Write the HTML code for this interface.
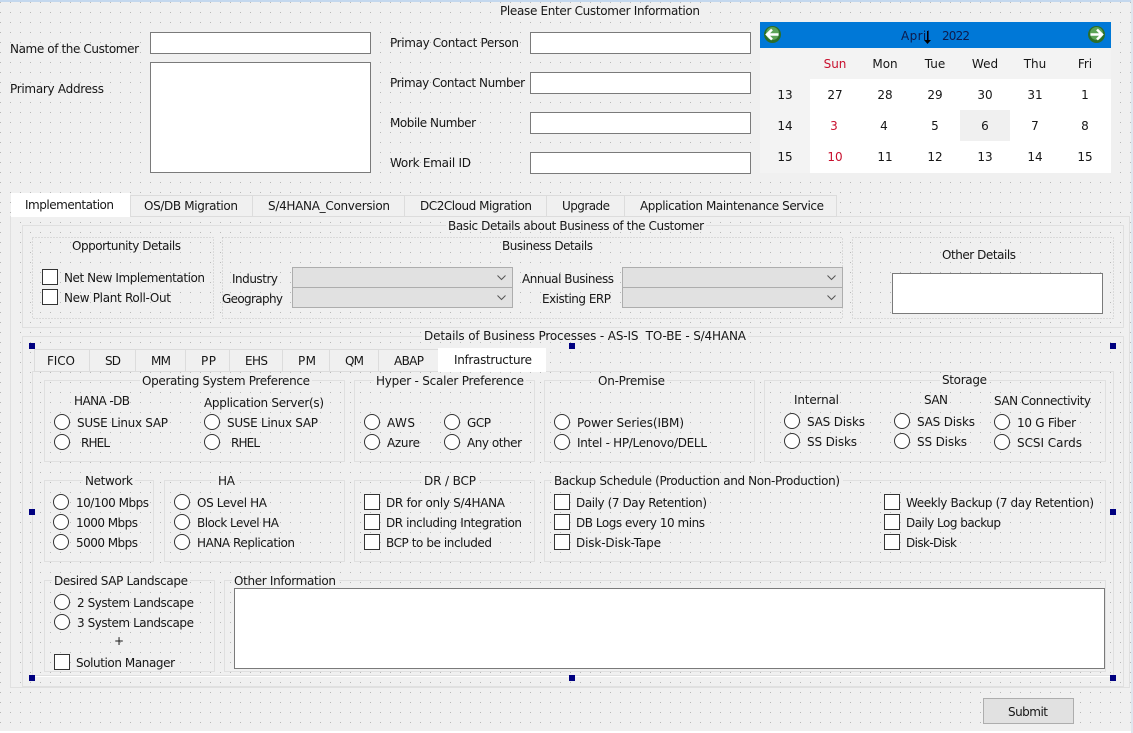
<!DOCTYPE html>
<html><head><meta charset="utf-8"><style>
html,body{margin:0;padding:0;width:1133px;height:733px;overflow:hidden;background:#f0f0f0}
svg{display:block}
text{font-family:"DejaVu Sans","Liberation Sans",sans-serif;font-size:12px;fill:#161616}
.m{text-anchor:middle}
.g{fill:none;stroke:#e0e0e0;stroke-width:1}
.i{fill:#fff;stroke:#7a7a7a;stroke-width:1}
.c{fill:#fff;stroke:#333;stroke-width:1}
.b{fill:#f0f0f0}
.h{fill:#000080}
.tb{fill:#f0f0f0;stroke:#dcdcdc}
.cb{fill:#e1e1e1;stroke:#adadad}
.ch{fill:none;stroke:#555;stroke-width:1}
.d{fill:none;stroke:#c4c4c4;stroke-dasharray:1 2}
</style></head><body>
<svg width="1133" height="733" viewBox="0 0 1133 733" xmlns="http://www.w3.org/2000/svg">
<defs><pattern id="dots" x="0" y="2" width="10" height="10" patternUnits="userSpaceOnUse"><rect width="10" height="10" fill="#f0f0f0"/><rect width="1" height="1" fill="#b8b8b8"/></pattern></defs>
<rect width="1133" height="733" fill="url(#dots)"/>
<rect width="1133" height="2" fill="#c4d8ee"/>
<rect x="0" y="731" width="1133" height="2" fill="#fff"/>
<rect x="1131" y="0" width="2" height="733" fill="#dfe6ee"/>

<rect class="b" x="498" y="3" width="205" height="14"/>
<text x="500" y="15" textLength="200">Please Enter Customer Information</text>
<text x="10" y="53" textLength="129">Name of the Customer</text>
<text x="10" y="93" textLength="94">Primary Address</text>
<rect class="i" x="150.500" y="32.500" width="220" height="21"/>
<rect class="i" x="150.500" y="62.500" width="220" height="110"/>
<text x="390" y="47" textLength="129">Primay Contact Person</text>
<text x="390" y="87" textLength="135">Primay Contact Number</text>
<text x="390" y="127" textLength="86">Mobile Number</text>
<text x="390" y="167" textLength="81">Work Email ID</text>
<rect class="i" x="530.500" y="32.500" width="220" height="21"/>
<rect class="i" x="530.500" y="72.500" width="220" height="21"/>
<rect class="i" x="530.500" y="112.500" width="220" height="21"/>
<rect class="i" x="530.500" y="152.500" width="220" height="21"/>

<!-- calendar -->
<rect x="760" y="22" width="351" height="151" fill="#f3f3f3"/>
<rect x="760" y="22" width="351" height="26" fill="#0078d7"/>
<rect x="810" y="79" width="301" height="94" fill="#fff"/>
<rect x="960" y="110" width="50" height="31" fill="#f0f0f0"/>
<circle cx="772.500" cy="34.500" r="8.500" fill="#2c6e28"/><circle cx="772.500" cy="33.500" r="6.500" fill="#5da356"/>
<path d="M778.500 34.500H768M772 29.500L767 34.500L772 39.500" fill="none" stroke="#fff" stroke-width="2.500"/>
<circle cx="1096.500" cy="34.500" r="8.500" fill="#2c6e28"/><circle cx="1096.500" cy="33.500" r="6.500" fill="#5da356"/>
<path d="M1090.500 34.500H1101M1097 29.500L1102 34.500L1097 39.500" fill="none" stroke="#fff" stroke-width="2.500"/>
<text x="901" y="40" textLength="29" style="fill:#0d1b4d">April</text>
<text x="942" y="40" textLength="28" style="fill:#0d1b4d">2022</text>
<path d="M927.500 31V41" stroke="#000"/><path d="M924 40H931L927.500 44Z" fill="#000"/>
<g class="m">
<text x="835" y="68" style="fill:#c8102e">Sun</text><text x="885" y="68">Mon</text><text x="935" y="68">Tue</text><text x="985" y="68">Wed</text><text x="1035" y="68">Thu</text><text x="1085" y="68">Fri</text>
<text x="785" y="99">13</text><text x="835" y="99">27</text><text x="885" y="99">28</text><text x="935" y="99">29</text><text x="985" y="99">30</text><text x="1035" y="99">31</text><text x="1085" y="99">1</text>
<text x="785" y="130">14</text><text x="834" y="130" style="fill:#c8102e">3</text><text x="884" y="130">4</text><text x="935" y="130">5</text><text x="985" y="130">6</text><text x="1035" y="130">7</text><text x="1085" y="130">8</text>
<text x="785" y="161">15</text><text x="835" y="161" style="fill:#c8102e">10</text><text x="885" y="161">11</text><text x="935" y="161">12</text><text x="985" y="161">13</text><text x="1035" y="161">14</text><text x="1085" y="161">15</text>
</g>

<!-- outer tabs -->
<rect class="g" x="10.500" y="216.500" width="1119" height="471"/>
<rect class="tb" x="130.500" y="195.500" width="122" height="21"/>
<rect class="tb" x="252.500" y="195.500" width="152" height="21"/>
<rect class="tb" x="404.500" y="195.500" width="142" height="21"/>
<rect class="tb" x="546.500" y="195.500" width="78" height="21"/>
<rect class="tb" x="624.500" y="195.500" width="212" height="21"/>
<rect x="11" y="193" width="119" height="24" fill="#fff"/>
<text x="25" y="209" textLength="89">Implementation</text>
<text x="144" y="210" textLength="94">OS/DB Migration</text>
<text x="268" y="210" textLength="122">S/4HANA_Conversion</text>
<text x="420" y="210" textLength="112">DC2Cloud Migration</text>
<text x="562" y="210" textLength="48">Upgrade</text>
<text x="640" y="210" textLength="184">Application Maintenance Service</text>

<!-- basic details -->
<rect class="g" x="22.500" y="225.500" width="1101" height="102"/>
<rect class="b" x="446" y="219" width="260" height="13"/>
<text x="448" y="230" textLength="256">Basic Details about Business of the Customer</text>
<rect class="d" x="32.500" y="237.500" width="181" height="81"/>
<rect class="d" x="222.500" y="237.500" width="620" height="81"/>
<rect class="d" x="852.500" y="237.500" width="261" height="81"/>
<text x="72" y="250" textLength="109">Opportunity Details</text>
<text x="502" y="250" textLength="91">Business Details</text>
<text x="942" y="259" textLength="74">Other Details</text>
<rect class="c" x="42.500" y="269.500" width="15" height="15"/>
<rect class="c" x="42.500" y="289.500" width="15" height="15"/>
<text x="64" y="282" textLength="141">Net New Implementation</text>
<text x="64" y="302" textLength="107">New Plant Roll-Out</text>
<text x="232" y="283" textLength="46">Industry</text>
<text x="222" y="303" textLength="61">Geography</text>
<text x="522" y="283" textLength="92">Annual Business</text>
<text x="542" y="303" textLength="69">Existing ERP</text>
<rect class="cb" x="292.500" y="267.500" width="220" height="20"/>
<rect class="cb" x="292.500" y="287.500" width="220" height="20"/>
<rect class="cb" x="622.500" y="267.500" width="220" height="20"/>
<rect class="cb" x="622.500" y="287.500" width="220" height="20"/>
<path class="ch" d="M497.500 275.500L501.500 279.500L505.500 275.500M497.500 295.500L501.500 299.500L505.500 295.500M827.500 275.500L831.500 279.500L835.500 275.500M827.500 295.500L831.500 299.500L835.500 295.500"/>
<rect class="i" x="892.500" y="273.500" width="210" height="40"/>

<!-- processes -->
<rect class="g" x="22.500" y="336.500" width="1101" height="350"/>
<rect class="b" x="422" y="329" width="326" height="13"/>
<text x="424" y="340" textLength="322" xml:space="preserve" style="white-space:pre">Details of Business Processes - AS-IS  TO-BE - S/4HANA</text>
<rect x="32.500" y="371.500" width="1081" height="304" fill="none" stroke="#e0e0e0"/>
<path d="M32 676.500H1113" stroke="#fff"/>
<rect class="tb" x="34.500" y="349.500" width="55" height="22"/>
<rect class="tb" x="89.500" y="349.500" width="46" height="22"/>
<rect class="tb" x="135.500" y="349.500" width="50" height="22"/>
<rect class="tb" x="185.500" y="349.500" width="44" height="22"/>
<rect class="tb" x="229.500" y="349.500" width="53" height="22"/>
<rect class="tb" x="282.500" y="349.500" width="47" height="22"/>
<rect class="tb" x="329.500" y="349.500" width="49" height="22"/>
<rect class="tb" x="378.500" y="349.500" width="60" height="22"/>
<rect x="438" y="348" width="108" height="24" fill="#fff"/>
<text x="47" y="365" textLength="28">FICO</text><text x="105" y="365" textLength="16">SD</text><text x="151" y="365" textLength="20">MM</text><text x="201" y="365" textLength="15">PP</text><text x="245" y="365" textLength="23">EHS</text><text x="298" y="365" textLength="18">PM</text><text x="345" y="365" textLength="19">QM</text><text x="394" y="365" textLength="30">ABAP</text><text x="454" y="364" textLength="78">Infrastructure</text>

<rect class="g" x="44.500" y="380.500" width="300" height="81"/>
<rect class="g" x="354.500" y="380.500" width="180" height="81"/>
<rect class="g" x="544.500" y="380.500" width="210" height="81"/>
<rect class="g" x="764.500" y="380.500" width="341" height="81"/>
<rect class="g" x="44.500" y="480.500" width="109" height="81"/>
<rect class="g" x="164.500" y="480.500" width="180" height="81"/>
<rect class="g" x="354.500" y="480.500" width="180" height="81"/>
<rect class="g" x="544.500" y="480.500" width="561" height="81"/>
<rect class="g" x="44.500" y="580.500" width="170" height="91"/>
<rect class="g" x="224.500" y="580.500" width="881" height="91"/>

<rect class="b" x="140" y="374" width="172" height="13"/><text x="142" y="385" textLength="168">Operating System Preference</text>
<rect class="b" x="374" y="374" width="152" height="13"/><text x="376" y="385" textLength="148">Hyper - Scaler Preference</text>
<rect class="b" x="596" y="374" width="71" height="13"/><text x="598" y="385" textLength="67">On-Premise</text>
<rect class="b" x="940" y="374" width="49" height="13"/><text x="942" y="384" textLength="45">Storage</text>
<text x="74" y="405" textLength="56">HANA -DB</text>
<text x="204" y="407" textLength="120">Application Server(s)</text>
<text x="794" y="404" textLength="45">Internal</text>
<text x="924" y="404" textLength="24">SAN</text>
<text x="994" y="405" textLength="97">SAN Connectivity</text>

<g class="c">
<circle cx="62" cy="422" r="7.500"/><circle cx="62" cy="442" r="7.500"/><circle cx="212" cy="422" r="7.500"/><circle cx="212" cy="442" r="7.500"/>
<circle cx="372" cy="422" r="7.500"/><circle cx="372" cy="442" r="7.500"/><circle cx="452" cy="422" r="7.500"/><circle cx="452" cy="442" r="7.500"/>
<circle cx="562" cy="422" r="7.500"/><circle cx="562" cy="442" r="7.500"/>
<circle cx="792" cy="421" r="7.500"/><circle cx="792" cy="441" r="7.500"/><circle cx="902" cy="421" r="7.500"/><circle cx="902" cy="441" r="7.500"/><circle cx="1002" cy="422" r="7.500"/><circle cx="1002" cy="442" r="7.500"/>
<circle cx="61" cy="502" r="7.500"/><circle cx="61" cy="522" r="7.500"/><circle cx="61" cy="542" r="7.500"/>
<circle cx="182" cy="502" r="7.500"/><circle cx="182" cy="522" r="7.500"/><circle cx="182" cy="542" r="7.500"/>
<circle cx="62" cy="602" r="7.500"/><circle cx="62" cy="622" r="7.500"/>
<rect x="364.500" y="494.500" width="15" height="15"/><rect x="364.500" y="514.500" width="15" height="15"/><rect x="364.500" y="534.500" width="15" height="15"/>
<rect x="554.500" y="494.500" width="15" height="15"/><rect x="554.500" y="514.500" width="15" height="15"/><rect x="554.500" y="534.500" width="15" height="15"/>
<rect x="884.500" y="494.500" width="15" height="15"/><rect x="884.500" y="514.500" width="15" height="15"/><rect x="884.500" y="534.500" width="15" height="15"/>
<rect x="54.500" y="654.500" width="15" height="15"/>
</g>

<text x="77" y="427" textLength="91">SUSE Linux SAP</text><text x="81" y="447" textLength="29">RHEL</text>
<text x="227" y="427" textLength="91">SUSE Linux SAP</text><text x="231" y="447" textLength="29">RHEL</text>
<text x="387" y="427" textLength="28">AWS</text><text x="387" y="447" textLength="33">Azure</text>
<text x="467" y="427" textLength="24">GCP</text><text x="467" y="447" textLength="55">Any other</text>
<text x="577" y="427" textLength="107">Power Series(IBM)</text><text x="577" y="447" textLength="130">Intel - HP/Lenovo/DELL</text>
<text x="807" y="426" textLength="58">SAS Disks</text><text x="807" y="446" textLength="50">SS Disks</text>
<text x="917" y="426" textLength="58">SAS Disks</text><text x="917" y="446" textLength="50">SS Disks</text>
<text x="1017" y="427" textLength="59">10 G Fiber</text><text x="1017" y="447" textLength="65">SCSI Cards</text>

<rect class="b" x="83" y="474" width="52" height="13"/><text x="85" y="485" textLength="48">Network</text>
<rect class="b" x="216" y="474" width="21" height="13"/><text x="218" y="485" textLength="17">HA</text>
<rect class="b" x="422" y="474" width="57" height="13"/><text x="424" y="485" textLength="52">DR / BCP</text>
<rect class="b" x="552" y="474" width="291" height="13"/><text x="554" y="485" textLength="286">Backup Schedule (Production and Non-Production)</text>

<text x="76" y="507" textLength="73">10/100 Mbps</text><text x="76" y="527" textLength="62">1000 Mbps</text><text x="76" y="547" textLength="62">5000 Mbps</text>
<text x="197" y="507" textLength="70">OS Level HA</text><text x="197" y="527" textLength="82">Block Level HA</text><text x="197" y="547" textLength="98">HANA Replication</text>
<text x="386" y="507" textLength="119">DR for only S/4HANA</text><text x="386" y="527" textLength="136">DR including Integration</text><text x="386" y="547" textLength="106">BCP to be included</text>
<text x="576" y="507" textLength="131">Daily (7 Day Retention)</text><text x="576" y="527" textLength="129">DB Logs every 10 mins</text><text x="576" y="547" textLength="85">Disk-Disk-Tape</text>
<text x="906" y="507" textLength="188">Weekly Backup (7 day Retention)</text><text x="906" y="527" textLength="95">Daily Log backup</text><text x="906" y="547" textLength="51">Disk-Disk</text>

<rect class="b" x="52" y="574" width="138" height="13"/><text x="54" y="585" textLength="134">Desired SAP Landscape</text>
<rect class="b" x="232" y="574" width="107" height="13"/><text x="234" y="585" textLength="102">Other Information</text>
<rect class="i" x="234.500" y="588.500" width="870" height="80"/>
<text x="77" y="607" textLength="117">2 System Landscape</text><text x="77" y="627" textLength="117">3 System Landscape</text>
<text x="114" y="645">+</text>
<text x="76" y="667" textLength="99">Solution Manager</text>

<g class="h">
<rect x="29" y="343" width="6" height="6"/><rect x="569" y="343" width="6" height="6"/><rect x="1110" y="343" width="6" height="6"/>
<rect x="29" y="509" width="6" height="6"/><rect x="1110" y="509" width="6" height="6"/>
<rect x="29" y="675" width="6" height="6"/><rect x="569" y="675" width="6" height="6"/><rect x="1110" y="675" width="6" height="6"/>
</g>

<rect class="cb" x="983.500" y="698.500" width="90" height="25"/>
<text x="1008" y="716" textLength="40">Submit</text>
</svg>
</body></html>
